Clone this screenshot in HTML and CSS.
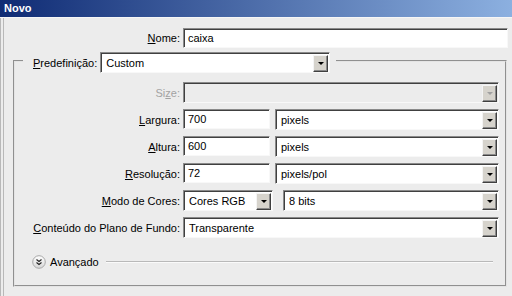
FILE: index.html
```html
<!DOCTYPE html>
<html>
<head>
    <link rel="stylesheet" href="styles.css">
</head>
<body>
    <div class="titlebar">Novo</div>
    <div class="window">
        <div class="nome-row">
            <span class="lbl"><u>N</u>ome:</span>
            <div class="field nome">caixa</div>
        </div>

        <fieldset class="group">
            <legend class="preset">
                <span class="lbl-inline"><u>P</u>redefinição:</span>
                <div class="field select preset-select"><span>Custom</span><i class="btn"><b class="arrow"></b></i></div>
            </legend>

            <div class="grid">
                <span class="lbl off">Si<u>z</u>e:</span>
                <div class="field select disabled"><span></span><i class="btn"><b class="arrow grey"></b></i></div>

                <span class="lbl"><u>L</u>argura:</span>
                <div class="pair">
                    <div class="field num">700</div>
                    <div class="field select unit"><span>pixels</span><i class="btn"><b class="arrow"></b></i></div>
                </div>

                <span class="lbl"><u>A</u>ltura:</span>
                <div class="pair">
                    <div class="field num">600</div>
                    <div class="field select unit"><span>pixels</span><i class="btn"><b class="arrow"></b></i></div>
                </div>

                <span class="lbl"><u>R</u>esolução:</span>
                <div class="pair">
                    <div class="field num">72</div>
                    <div class="field select unit"><span>pixels/pol</span><i class="btn"><b class="arrow"></b></i></div>
                </div>

                <span class="lbl"><u>M</u>odo de Cores:</span>
                <div class="pair wide-gap">
                    <div class="field select mode"><span>Cores RGB</span><i class="btn"><b class="arrow"></b></i></div>
                    <div class="field select bits"><span>8 bits</span><i class="btn"><b class="arrow"></b></i></div>
                </div>

                <span class="lbl"><u>C</u>onteúdo do Plano de Fundo:</span>
                <div class="field select"><span>Transparente</span><i class="btn"><b class="arrow"></b></i></div>
            </div>

            <div class="advanced">
                <svg class="adv-icon" width="14" height="14" viewBox="0 0 14 14">
                    <defs>
                        <linearGradient id="g" x1="0" y1="0" x2="0" y2="1">
                            <stop offset="0" stop-color="#ffffff"/>
                            <stop offset="1" stop-color="#d6d6d6"/>
                        </linearGradient>
                    </defs>
                    <circle cx="7" cy="7" r="6.3" fill="url(#g)" stroke="#a8a8a8"/>
                    <path d="M4.5 4.5 L7 6.5 L9.5 4.5 M4.5 7.5 L7 9.5 L9.5 7.5" fill="none" stroke="#222" stroke-width="1.1"/>
                </svg>
                <span>Avançado</span>
                <span class="rule"></span>
            </div>
        </fieldset>
    </div>
</body>
</html>
```

FILE: styles.css
```css
body {
    margin: 0;
    background-color: #ececec;
    font-family: "Liberation Sans", Arial, sans-serif;
    font-size: 11px;
    color: #000;
}
.titlebar {
    height: 17px;
    line-height: 17px;
    padding-left: 4px;
    color: #fff;
    font-weight: bold;
    background: linear-gradient(to right, #0f2b74, #8cb0e0);
    border-bottom: 1px solid #f6f6f6;
}
.window {
    height: 268px;
    padding: 10px 4px 0 9px;
    border-left: 4px double #b8b8b8;
}
.nome-row {
    display: flex;
    align-items: center;
    gap: 3px;
}
.lbl {
    text-align: right;
    white-space: nowrap;
}
.nome-row .lbl {
    width: 167px;
}
.lbl.off {
    color: #a3a3a3;
}

/* sunken box used by text inputs and dropdowns */
.field {
    box-sizing: border-box;
    height: 20px;
    display: flex;
    align-items: center;
    padding-left: 4px;
    background-color: #fff;
    border: 1px solid;
    border-color: #8a8a8a #f8f8f8 #f8f8f8 #8a8a8a;
    box-shadow: inset 1px 1px #404040;
    white-space: nowrap;
}
.field.nome {
    flex: 1;
}
.select {
    height: 21px;
    padding-right: 1px;
}
.select span {
    flex: 1;
    padding-left: 1px;
}
.select.disabled {
    background-color: #ececec;
}
.btn {
    box-sizing: border-box;
    width: 15px;
    height: 17px;
    margin-top: 1px;
    display: flex;
    align-items: center;
    justify-content: center;
    background-color: #d6d3cc;
    border: 1px solid;
    border-color: #f4f4f4 #404040 #404040 #f4f4f4;
    box-shadow: inset -1px -1px #8a8a8a;
}
.arrow {
    width: 0;
    height: 0;
    border-left: 3px solid transparent;
    border-right: 3px solid transparent;
    border-top: 3px solid #000;
}
.arrow.grey {
    border-top-color: #a0a0a0;
}

.group {
    margin: 1px 1px 0 0;
    padding: 0 6px 16px 0;
    border: 2px groove #e4e4e4;
}
.preset {
    display: flex;
    align-items: center;
    gap: 3px;
    margin-left: 8px;
    padding: 3px 6px 0 10px;
}
.preset-select {
    width: 230px;
}
.grid {
    display: grid;
    grid-template-columns: 165px 1fr;
    grid-auto-rows: 21px;
    column-gap: 3px;
    row-gap: 6px;
    align-items: center;
    margin-top: 9px;
}
.pair {
    display: flex;
    gap: 5px;
}
.pair.wide-gap {
    gap: 10px;
}
.num {
    width: 87px;
    height: 20px;
}
.unit {
    flex: 1;
}
.mode {
    width: 90px;
}
.bits {
    flex: 1;
}

.advanced {
    display: flex;
    align-items: center;
    gap: 4px;
    height: 14px;
    margin-top: 17px;
    padding: 0 6px 0 17px;
}
.adv-icon {
    flex: none;
}
.rule {
    flex: 1;
    margin-left: 3px;
    border-top: 1px solid #b9b9b9;
    border-bottom: 1px solid #fafafa;
}
```
